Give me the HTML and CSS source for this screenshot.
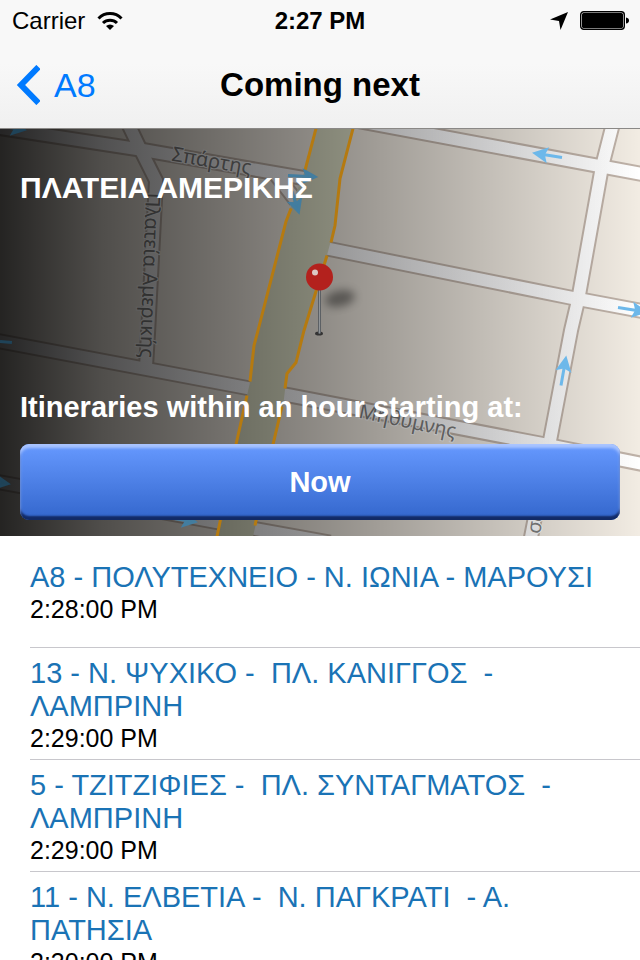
FILE: index.html
```html
<!DOCTYPE html>
<html lang="en">
<head>
  <meta charset="UTF-8">
  <meta name="viewport" content="width=device-width, initial-scale=1.0">
  <title>Coming next</title>
  <link rel="stylesheet" href="styles.css">
</head>
<body>
  <header class="top">
    <div class="status-bar">
      <div class="carrier">
        <span>Carrier</span>
        <svg width="26" height="20" viewBox="0 0 26 20" fill="none" stroke="#000" stroke-width="3" aria-hidden="true">
          <path d="M1.5 7.500a16 16 0 0 1 23 0"/>
          <path d="M6 12a10 10 0 0 1 14 0"/>
          <path d="M13 19l-4-4a6 6 0 0 1 8 0z" fill="#000" stroke="none"/>
        </svg>
      </div>
      <time class="clock">2:27 PM</time>
      <div class="indicators">
        <svg width="18" height="18" viewBox="0 0 18 18" aria-hidden="true">
          <path d="M18 0L10.500 18L9 9L0 7.500z"/>
        </svg>
        <svg width="50" height="20" viewBox="0 0 50 20" aria-hidden="true">
          <rect x=".7" y=".7" width="43.600" height="17.600" rx="3" fill="none" stroke="#000" stroke-width="1.400"/>
          <rect x="2" y="2" width="41" height="15" rx="1.500"/>
          <path d="M46 6.500q3 .5 3 3t-3 3z"/>
        </svg>
      </div>
    </div>
    <nav class="nav-bar">
      <a class="back" href="#">
        <svg width="24" height="40" viewBox="0 0 24 40" fill="none" stroke="currentColor" stroke-width="6" aria-hidden="true">
          <path d="M22.500 2L5 20L22.500 38"/>
        </svg>
        A8
      </a>
      <h1>Coming next</h1>
    </nav>
  </header>

  <section class="stop">
    <svg class="map" viewBox="0 0 640 408" preserveAspectRatio="xMidYMid slice" aria-hidden="true">
      <defs>
        <linearGradient id="shade">
          <stop offset="0" stop-opacity=".85"/>
          <stop offset=".16" stop-opacity=".67"/>
          <stop offset=".5" stop-opacity=".41"/>
          <stop offset="1" stop-opacity="0"/>
        </linearGradient>
        <linearGradient id="asphalt" gradientUnits="userSpaceOnUse" x1="0" y1="0" x2="640" y2="0">
          <stop offset="0" stop-color="#f4f2f2"/>
          <stop offset=".4" stop-color="#f8f8fa"/>
          <stop offset="1" stop-color="#fff"/>
        </linearGradient>
        <filter id="soft" x="-50%" y="-50%" width="200%" height="200%"><feGaussianBlur stdDeviation="4"/></filter>
        <g id="roads">
          <path d="M-10 -2L140 21L312 51"/>
          <path d="M128 -5L139 18L156 52L153 110L148 205L146 238"/>
          <path d="M-10 211L250 260L290 267L540 315L650 337"/>
          <path d="M-10 352L230 396L330 414"/>
          <path d="M350 -9L650 47"/>
          <path d="M322 119L570 169L650 184"/>
          <path d="M613 -5L602 38L578 172L571 202L550 312L530 414"/>
          <path d="M275 45L296 72"/>
        </g>
      </defs>
      <rect width="640" height="408" fill="#f2ece3"/>
      <use href="#roads" class="road-edge"/>
      <use href="#roads" class="road"/>

      <!-- avenue -->
      <path fill="#dfe1c8" d="M316 0L305 42L290 80L285 95L258 202L254 217L250 254L247 267L236 316L217 408H253L283 278L287 245L296 234L305 202L328 123L335 97L340 50L353 0z"/>

      <g class="street-names">
        <text transform="translate(171 32) rotate(10)">Σπάρτης</text>
        <text transform="translate(146 64) rotate(92)">Πλατεία Αμερικής</text>
        <text transform="translate(358 289) rotate(12)">Μηθύμνης</text>
        <text transform="translate(540 406) rotate(-80)">σα</text>
      </g>

      <rect width="640" height="408" fill="url(#shade)"/>

      <g class="avenue-edge">
        <path d="M316 0L305 42"/>
        <path d="M291 80L286 93L258 202L254 217L250 253"/>
        <path d="M247 267L236 316L217 408"/>
        <path d="M353 0L340 50L335 97L331 114"/>
        <path d="M327 127L304 202L296 234L287 245L285 260"/>
        <path d="M282 278L273 316L255 397"/>
      </g>

      <!-- one way arrows -->
      <g class="arrows">
        <path d="M0 0H19M17 -5L27 0L17 5L19 0z" transform="translate(562 29) rotate(189)"/>
        <path d="M0 0H19M17 -5L27 0L17 5L19 0z" transform="translate(618 179) rotate(9)"/>
        <path d="M0 0H19M17 -5L27 0L17 5L19 0z" transform="translate(561 257) rotate(-80)"/>
      </g>
      <g class="arrows shaded">
        <path d="M0 0H20M17 -5L27 0L17 5L19 0z" transform="translate(288 47) rotate(3)"/>
        <path d="M0 0H14M11 -5L21 0L11 5L13 0z" transform="translate(292 63) rotate(72)"/>
        <path d="M0 0H19M17 -5L27 0L17 5L19 0z" transform="translate(168 389) rotate(9)"/>
      </g>
      <g class="arrows dark">
        <path d="M0 0H19M17 -5L27 0L17 5L19 0z" transform="translate(-19 351) rotate(9)"/>
        <path d="M0 0H12" transform="translate(0 213) rotate(5)"/>
        <path d="M0 0H19M17 -5L27 0L17 5L19 0z" transform="translate(-3 -3) rotate(9)"/>
      </g>

      <!-- pin -->
      <ellipse cx="340" cy="170" rx="15" ry="8" fill="#000" opacity=".4" transform="rotate(-12 340 170)" filter="url(#soft)"/>
      <ellipse cx="319" cy="205" rx="4" ry="2" fill="#333"/>
      <path d="M319.500 160V205" stroke="#5c6064" stroke-width="3"/>
      <path d="M319.500 160V205" stroke="#8f9498" stroke-width="1"/>
      <circle cx="319.500" cy="148.500" r="13.500" fill="#b3211d"/>
      <circle cx="315" cy="144" r="3" fill="#dcc8c4"/>
    </svg>
    <h2>ΠΛΑΤΕΙΑ ΑΜΕΡΙΚΗΣ</h2>
    <p class="hint" id="start-label">Itineraries within an hour starting at:</p>
    <button class="start" type="button" aria-describedby="start-label">Now</button>
  </section>

  <ul class="itineraries">
    <li>
      <a href="#">Α8 - ΠΟΛΥΤΕΧΝΕΙΟ - Ν. ΙΩΝΙΑ - ΜΑΡΟΥΣΙ</a>
      <time>2:28:00 PM</time>
    </li>
    <li>
      <a href="#">13 - Ν. ΨΥΧΙΚΟ -  ΠΛ. ΚΑΝΙΓΓΟΣ  - ΛΑΜΠΡΙΝΗ</a>
      <time>2:29:00 PM</time>
    </li>
    <li>
      <a href="#">5 - ΤΖΙΤΖΙΦΙΕΣ -  ΠΛ. ΣΥΝΤΑΓΜΑΤΟΣ  - ΛΑΜΠΡΙΝΗ</a>
      <time>2:29:00 PM</time>
    </li>
    <li>
      <a href="#">11 - Ν. ΕΛΒΕΤΙΑ -  Ν. ΠΑΓΚΡΑΤΙ  - Α. ΠΑΤΗΣΙΑ</a>
      <time>2:30:00 PM</time>
    </li>
  </ul>
</body>
</html>
```
FILE: styles.css
```css
* {
  box-sizing: border-box;
}
body {
  margin: 0;
  height: 100vh;
  display: flex;
  flex-direction: column;
  font-family: "Liberation Sans", Arial, sans-serif;
  background: #fff;
  color: #000;
}
h1, h2, p, ul {
  margin: 0;
  padding: 0;
}
a {
  text-decoration: none;
}

/* Header */
.top {
  flex: none;
  background: linear-gradient(#f8f8f8 50%, #f0f0f0);
  border-bottom: 1px solid #8a8886;
}
.status-bar,
.nav-bar {
  display: grid;
  grid-template-columns: 1fr auto 1fr;
  align-items: center;
}
.status-bar {
  height: 42px;
  padding: 0 12px;
  font-size: 24px;
}
.carrier {
  display: flex;
  align-items: center;
  gap: 12px;
}
.clock {
  font-weight: bold;
}
.indicators {
  display: flex;
  align-items: center;
  justify-content: flex-end;
  gap: 12px;
  margin-right: -2px;
}
.nav-bar {
  height: 86px;
  padding: 0 16px;
}
.back {
  display: flex;
  align-items: center;
  gap: 14px;
  font-size: 34px;
  color: #007aff;
}
h1 {
  font-size: 33px;
}

/* Map */
.stop {
  flex: none;
  position: relative;
  display: flex;
  flex-direction: column;
  min-height: 407px;
  padding: 41px 20px 16px;
  color: #fff;
  overflow: hidden;
}
.map {
  position: absolute;
  inset: 0;
  width: 100%;
  height: 100%;
}
.road-edge {
  fill: none;
  stroke: #bfb2a8;
  stroke-width: 16px;
}
.road {
  fill: none;
  stroke: url(#asphalt);
  stroke-width: 12px;
}
.avenue-edge {
  fill: none;
  stroke: #b57a10;
  stroke-width: 3px;
}
.arrows {
  fill: #6db8ea;
  stroke: #6db8ea;
  stroke-width: 3px;
}
.arrows.shaded {
  fill: #437d9f;
  stroke: #437d9f;
}
.arrows.dark {
  fill: #1f4358;
  stroke: #1f4358;
}
.street-names {
  font-family: "Noto Sans", sans-serif;
  font-size: 20px;
  fill: #808080;
  stroke: #fff;
  stroke-width: 2px;
  paint-order: stroke;
}
h2,
.hint {
  position: relative;
  font-size: 30px;
  font-weight: bold;
  line-height: 36px;
}
.hint {
  margin-top: auto;
  font-size: 29px;
}
.start {
  position: relative;
  height: 76px;
  margin-top: 19px;
  border: none;
  border-radius: 9px;
  background: linear-gradient(#6699ff, #3366cc);
  box-shadow: inset 0 4px 3px #a9c4ff, inset 0 -4px 2px #122a66;
  color: #fff;
  font: bold 29px "Liberation Sans", Arial, sans-serif;
  cursor: pointer;
}

/* List */
.itineraries {
  flex: 1;
  min-height: 0;
  overflow-y: auto;
  scrollbar-width: none;
  list-style: none;
}
.itineraries li {
  display: flex;
  flex-direction: column;
  justify-content: center;
  min-height: 112px;
  margin-left: 30px;
  padding: 2px 20px 0 0;
  border-bottom: 1px solid #c8c7cc;
}
.itineraries a {
  font-size: 29px;
  line-height: 33px;
  color: #1a73b5;
  white-space: pre-wrap;
}
.itineraries time {
  font-size: 25px;
  line-height: 30px;
}
```
